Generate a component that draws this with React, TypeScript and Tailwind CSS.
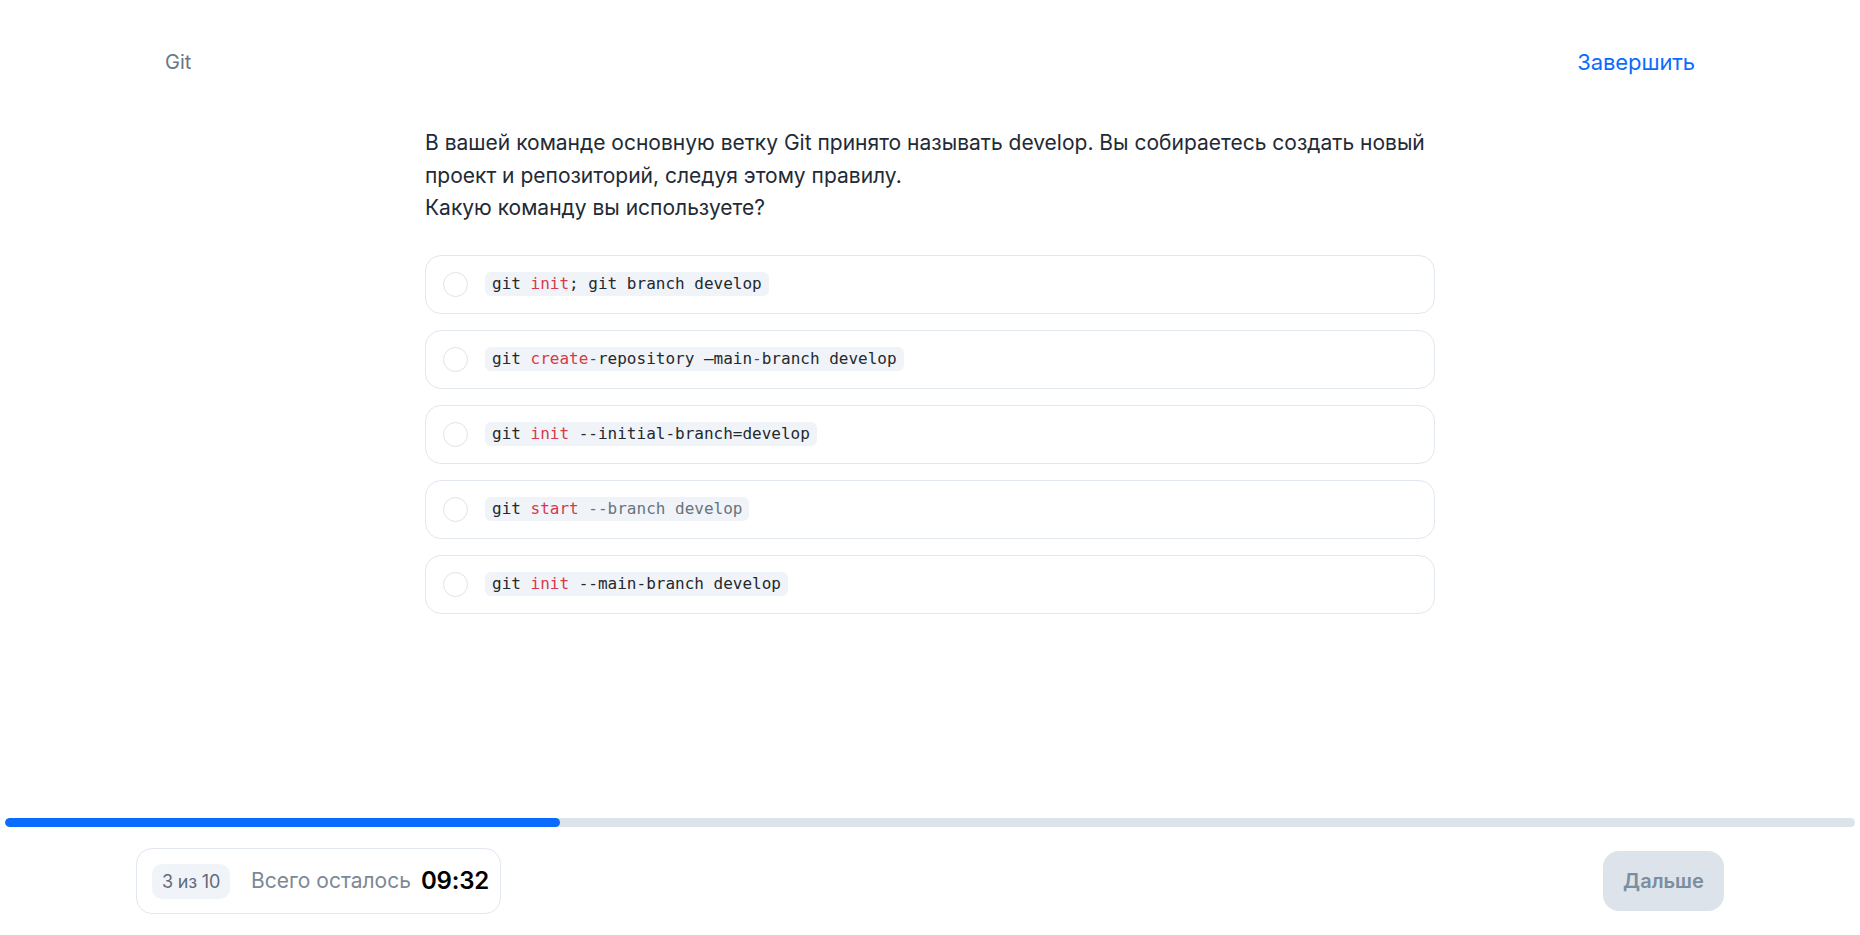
import React from "react";

type Tok = { t: string; c?: "k" | "b" | "g" };

const options: Tok[][] = [
  [{ t: "git " }, { t: "init", c: "k" }, { t: "; git branch develop" }],
  [
    { t: "git " },
    { t: "create", c: "k" },
    { t: "-", c: "b" },
    { t: "repository –main" },
    { t: "-", c: "b" },
    { t: "branch develop" },
  ],
  [{ t: "git " }, { t: "init", c: "k" }, { t: " --initial-branch=develop" }],
  [{ t: "git " }, { t: "start", c: "k" }, { t: " --branch develop", c: "g" }],
  [{ t: "git " }, { t: "init", c: "k" }, { t: " --main-branch develop" }],
];

function TokSpan({ tok }: { tok: Tok }) {
  if (tok.c === "k") return <span className="text-[#d73a49]">{tok.t}</span>;
  if (tok.c === "b") return <span className="text-[#005cc5]">{tok.t}</span>;
  if (tok.c === "g") return <span className="text-[#6a737d]">{tok.t}</span>;
  return <span>{tok.t}</span>;
}

export default function App() {
  const sans = { fontFamily: "Inter, 'Noto Sans', sans-serif" };
  return (
    <div
      className="min-h-screen flex flex-col bg-white text-[#1f2630]"
      style={sans}
    >
      <header className="pt-[48px] px-[165px] flex justify-between items-center">
        <span className="text-[20px] leading-[28px] text-[#6b7684]">Git</span>
        <button className="text-[22px] leading-[28px] text-[#0a6cff] tracking-[-0.1px]">
          Завершить
        </button>
      </header>

      <main className="flex-1">
        <div className="w-[1010px] mx-auto mt-[51px]">
          <p className="text-[21px] leading-[32.5px] text-[#222a35]">
            В вашей команде основную ветку Git принято называть develop. Вы
            собираетесь создать новый
            <br />
            проект и репозиторий, следуя этому правилу.
            <br />
            Какую команду вы используете?
          </p>
          <div className="mt-[30px] flex flex-col gap-[16px]">
            {options.map((opt, i) => (
              <label
                key={i}
                className="h-[59px] border border-[#e1e7ef] rounded-[16px] flex items-center pl-[17px] cursor-pointer"
              >
                <span className="w-[25px] h-[25px] rounded-full border-[1.5px] border-[#dde4ec] shrink-0" />
                <code
                  className="ml-[17px] bg-[#f0f4f9] rounded-[6px] px-[7px] h-[24px] leading-[24px] inline-block whitespace-pre text-[16px] text-[#24292e]"
                  style={{ fontFamily: "'DejaVu Sans Mono', 'Liberation Mono', monospace" }}
                >
                  {opt.map((tok, j) => (
                    <TokSpan key={j} tok={tok} />
                  ))}
                </code>
              </label>
            ))}
          </div>
        </div>
      </main>

      <div className="mx-[5px] h-[9px] rounded-full bg-[#dce3eb] overflow-hidden">
        <div className="h-full w-[30%] rounded-full bg-[#0a6cff]" />
      </div>

      <footer className="mt-[21px] mb-[21px] px-[136px] flex justify-between items-center">
        <div className="h-[66px] w-[365px] border border-[#e1e7ef] rounded-[16px] flex items-center pl-[15px]">
          <span className="h-[35px] px-[10px] rounded-[10px] bg-[#f0f4f9] flex items-center text-[18px] text-[#5f6b79] tracking-[-0.2px]">
            3 из 10
          </span>
          <span className="ml-[21px] text-[21px] text-[#7d8896]">
            Всего осталось
          </span>
          <span className="ml-[10px] text-[24px] font-semibold text-black tracking-[-0.2px]">
            09:32
          </span>
        </div>
        <button className="h-[60px] w-[121px] rounded-[16px] bg-[#dce3eb] text-[20px] font-semibold text-[#7a8ea0]">
          Дальше
        </button>
      </footer>
    </div>
  );
}
